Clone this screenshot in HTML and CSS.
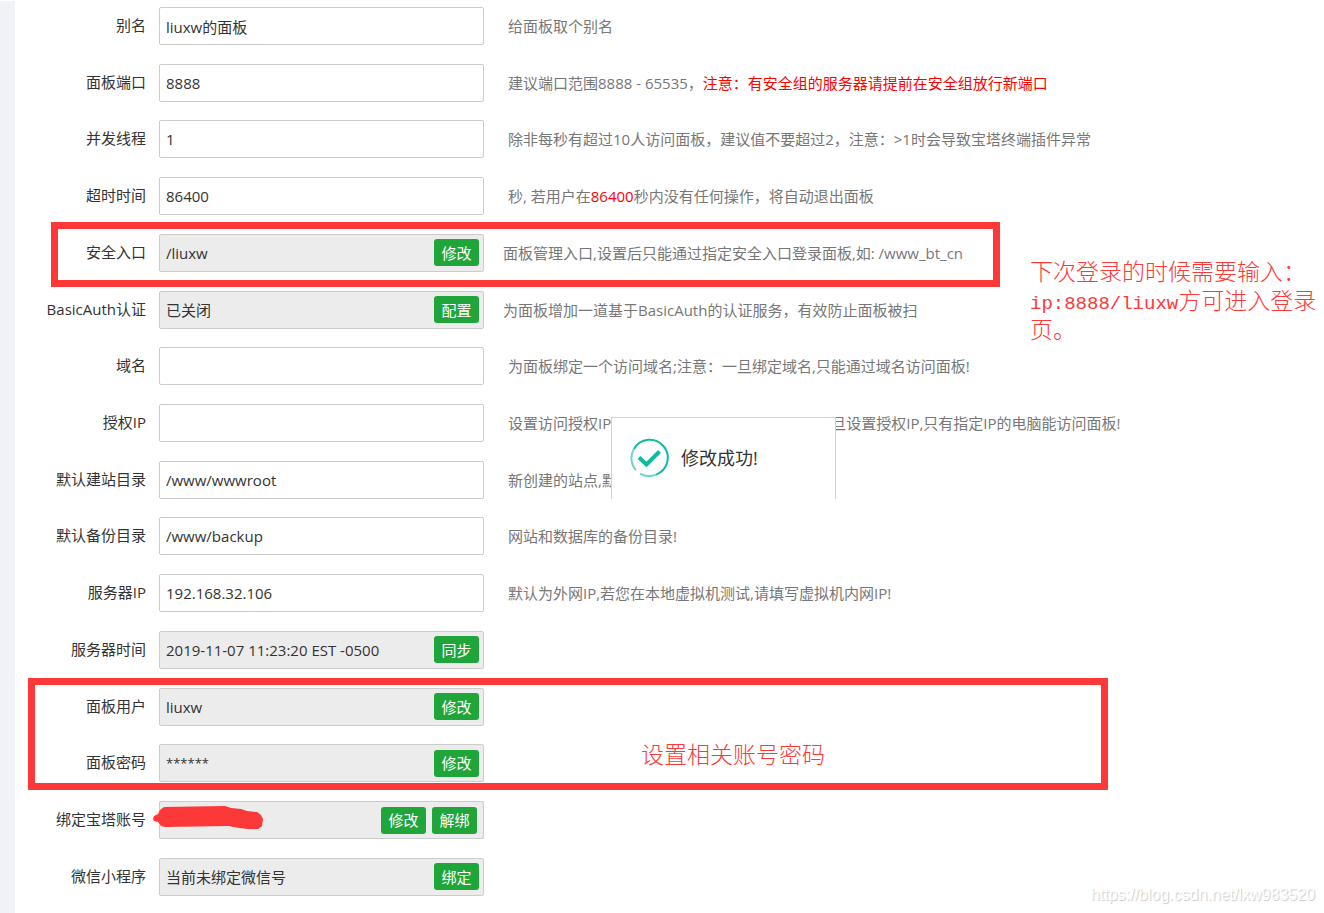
FILE: index.html
```html
<!DOCTYPE html>
<html lang="zh-CN">
<head>
<meta charset="utf-8">
<title>面板设置</title>
<link rel="stylesheet" href="styles.css">
</head>
<body>
<div class="page">
  <aside class="rail"></aside>
  <main class="content">
    <form class="settings">
      <div class="row">
        <label class="name" for="alias">别名</label>
        <div class="field"><input class="value" id="alias" type="text" value="liuxw的面板"></div>
        <p class="hint">给面板取个别名</p>
      </div>
      <div class="row">
        <label class="name" for="port">面板端口</label>
        <div class="field"><input class="value" id="port" type="text" value="8888"></div>
        <p class="hint">建议端口范围8888 - 65535，<span class="warn">注意：有安全组的服务器请提前在安全组放行新端口</span></p>
      </div>
      <div class="row">
        <label class="name" for="threads">并发线程</label>
        <div class="field"><input class="value" id="threads" type="text" value="1"></div>
        <p class="hint">除非每秒有超过10人访问面板，建议值不要超过2，注意：&gt;1时会导致宝塔终端插件异常</p>
      </div>
      <div class="row">
        <label class="name" for="timeout">超时时间</label>
        <div class="field"><input class="value" id="timeout" type="text" value="86400"></div>
        <p class="hint">秒, 若用户在<span class="warn">86400</span>秒内没有任何操作，将自动退出面板</p>
      </div>
      <div class="row">
        <label class="name" for="entry">安全入口</label>
        <div class="field locked"><input class="value" id="entry" type="text" value="/liuxw" readonly><button class="btn" type="button">修改</button></div>
        <p class="hint near">面板管理入口,设置后只能通过指定安全入口登录面板,如: /www_bt_cn</p>
        <div class="frame frame-entry"></div>
        <p class="note note-entry">下次登录的时候需要输入：<br><span class="latin">ip:8888/liuxw</span>方可进入登录页。</p>
      </div>
      <div class="row">
        <label class="name" for="auth">BasicAuth认证</label>
        <div class="field locked"><input class="value" id="auth" type="text" value="已关闭" readonly><button class="btn" type="button">配置</button></div>
        <p class="hint near">为面板增加一道基于BasicAuth的认证服务，有效防止面板被扫</p>
      </div>
      <div class="row">
        <label class="name" for="domain">域名</label>
        <div class="field"><input class="value" id="domain" type="text"></div>
        <p class="hint">为面板绑定一个访问域名;注意：一旦绑定域名,只能通过域名访问面板!</p>
      </div>
      <div class="row">
        <label class="name" for="allow">授权IP</label>
        <div class="field"><input class="value" id="allow" type="text"></div>
        <p class="hint">设置访问授权IP<span class="resume">一旦设置授权IP,只有指定IP的电脑能访问面板!</span></p>
      </div>
      <div class="row">
        <label class="name" for="sites">默认建站目录</label>
        <div class="field"><input class="value" id="sites" type="text" value="/www/wwwroot"></div>
        <p class="hint">新创建的站点,默认</p>
      </div>
      <div class="row">
        <label class="name" for="backup">默认备份目录</label>
        <div class="field"><input class="value" id="backup" type="text" value="/www/backup"></div>
        <p class="hint">网站和数据库的备份目录!</p>
      </div>
      <div class="row">
        <label class="name" for="ip">服务器IP</label>
        <div class="field"><input class="value" id="ip" type="text" value="192.168.32.106"></div>
        <p class="hint">默认为外网IP,若您在本地虚拟机测试,请填写虚拟机内网IP!</p>
      </div>
      <div class="row">
        <label class="name" for="time">服务器时间</label>
        <div class="field locked"><input class="value" id="time" type="text" value="2019-11-07 11:23:20 EST -0500" readonly><button class="btn" type="button">同步</button></div>
      </div>
      <div class="row">
        <label class="name" for="user">面板用户</label>
        <div class="field locked"><input class="value" id="user" type="text" value="liuxw" readonly><button class="btn" type="button">修改</button></div>
        <div class="frame frame-account"></div>
        <p class="note note-account">设置相关账号密码</p>
      </div>
      <div class="row">
        <label class="name" for="pass">面板密码</label>
        <div class="field locked"><input class="value masked" id="pass" type="text" value="******" readonly><button class="btn" type="button">修改</button></div>
      </div>
      <div class="row">
        <label class="name" for="bound">绑定宝塔账号</label>
        <div class="field locked pair"><input class="value" id="bound" type="text" readonly><button class="btn" type="button">修改</button><button class="btn" type="button">解绑</button>
          <svg class="scribble" viewBox="0 0 110 24" aria-hidden="true"><path d="M0 13 L1 10 L5 8 L7 4 L11 1 L72 0 L78 2 L88 3 L94 5 L104 6 L108 9 L110 13 L109 20 L105 23 L94 23 L80 21 L76 20 L12 21 L8 20 L5 16 L1 15 Z"/></svg>
        </div>
      </div>
      <div class="row">
        <label class="name" for="wechat">微信小程序</label>
        <div class="field locked"><input class="value" id="wechat" type="text" value="当前未绑定微信号" readonly><button class="btn" type="button">绑定</button></div>
      </div>
    </form>
  </main>
  <div class="toast" role="status">
    <svg class="tick" viewBox="0 0 40 40" aria-hidden="true">
      <path class="ring fade" d="M7 32.2 A18 18 0 0 1 5 11"/>
      <path class="ring" d="M5 11 A18 18 0 1 1 27 36.6"/>
      <path class="ring fade" d="M27 36.6 A18 18 0 0 1 11 35.6"/>
      <path class="check" d="M10 19.5 L17.5 26.5 L30.5 13.5"/>
    </svg>
    <span>修改成功!</span>
  </div>
  <div class="watermark">https://blog.csdn.net/lxw983520</div>
</div>
</body>
</html>
```
FILE: styles.css
```css
* { box-sizing: border-box; }

body {
  margin: 0;
  background: #fff;
  color: #333;
  font: 15px/20px "Open Sans", "Noto Sans CJK SC", sans-serif;
}

p { margin: 0; }

.page {
  position: relative;
  display: flex;
  min-height: 100vh;
  overflow: hidden;
}

.rail {
  flex: 0 0 15px;
  margin-top: 1px;
  background: #f0f2f7;
}

.content {
  flex: 1;
  display: flex;
  padding: 7px 0 17px;
}

.settings {
  flex: 1;
  display: flex;
  flex-direction: column;
  justify-content: space-between;
}

.row {
  position: relative;
  display: flex;
  align-items: center;
}

.name {
  flex: 0 0 131px;
  margin-right: 13px;
  padding-bottom: 2px;
  text-align: right;
}

.field {
  position: relative;
  display: flex;
  align-items: center;
  flex: 0 0 325px;
  height: 38px;
  padding: 0 4px 0 6px;
  border: 1px solid #ccc;
  border-radius: 2px;
  background: #fff;
}

.locked { background: #ececec; }

.pair {
  gap: 6px;
  padding-right: 6px;
}

.value {
  flex: 1;
  min-width: 0;
  height: 30px;
  padding: 0;
  border: 0;
  outline: 0;
  background: transparent;
  color: #333;
  font: inherit;
}

.masked { font-size: 13px; }

.btn {
  flex: 0 0 45px;
  height: 27px;
  padding: 0;
  border: 0;
  border-radius: 3px;
  background: #20a53a;
  color: #fff;
  font: inherit;
}

.hint {
  margin-left: 24px;
  color: #777;
  white-space: nowrap;
}

.near { margin-left: 19px; }

.resume { margin-left: 205px; }

.warn { color: #f00; }

.frame {
  position: absolute;
  border: 7px solid #fc3838;
  pointer-events: none;
}

.frame-entry {
  left: 36px;
  top: -12px;
  width: 949px;
  height: 65px;
}

.frame-account {
  left: 13px;
  top: -10px;
  width: 1080px;
  height: 112px;
}

.note {
  position: absolute;
  color: #fc3838;
  font-size: 23px;
  font-weight: 300;
  line-height: 29px;
}

.note-entry {
  left: 1015px;
  top: 23px;
  width: 292px;
}

.note-account {
  left: 626px;
  top: 52px;
}

.latin {
  font-family: "Liberation Mono", monospace;
  font-size: 19px;
  font-weight: 400;
  line-height: 19px;
}

.scribble {
  position: absolute;
  left: -7px;
  top: 4px;
  width: 110px;
  height: 24px;
  fill: #fc3838;
}

.toast {
  position: absolute;
  left: 611px;
  top: 417px;
  display: flex;
  align-items: center;
  gap: 12px;
  width: 225px;
  height: 82px;
  padding: 0 0 2px 17px;
  border: 1px solid #d3d4d3;
  border-bottom: 0;
  background: #fff;
  font-size: 18px;
}

.tick {
  width: 40px;
  height: 40px;
  fill: none;
  stroke: #0dbc9e;
}

.ring { stroke-width: 2; }

.fade { stroke: #6fd6c4; }

.check { stroke-width: 4; }

.watermark {
  position: absolute;
  right: 9px;
  bottom: 8px;
  color: #fff;
  font: 16px/20px "Liberation Sans", sans-serif;
  text-shadow: 1px 1px 1px #c8c8c8;
}
```
